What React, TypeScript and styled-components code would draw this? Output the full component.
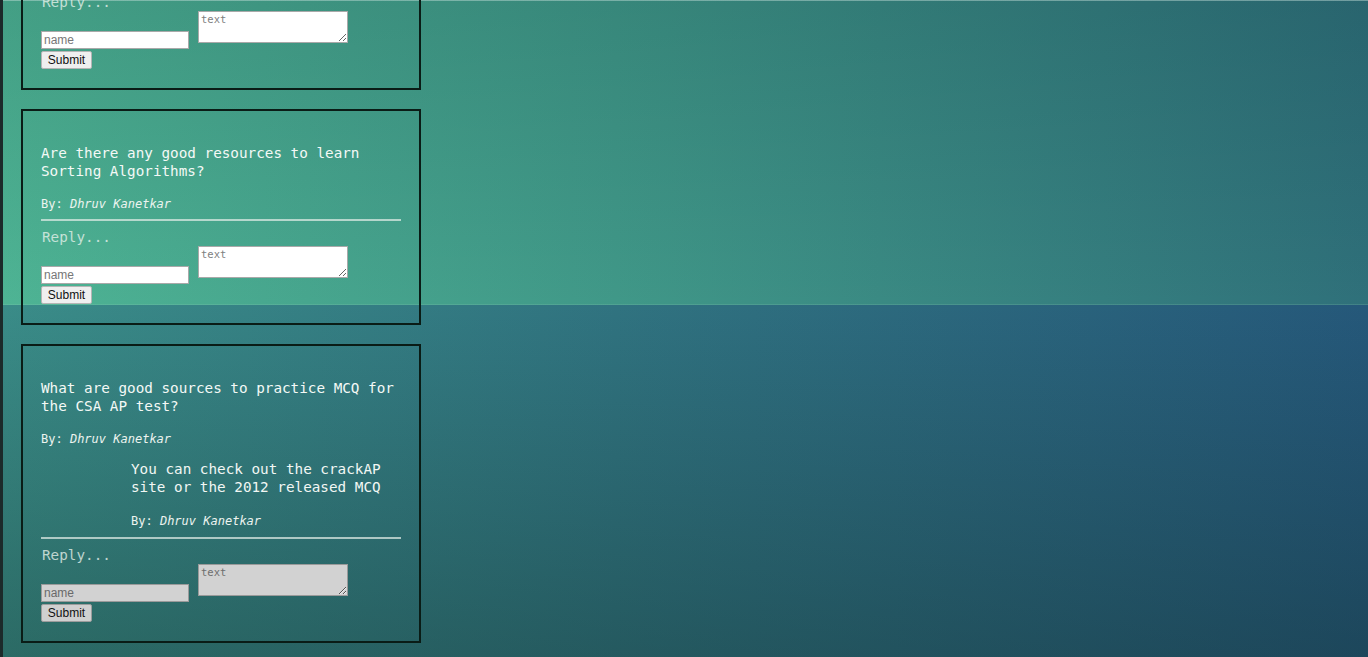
import React from "react";
import styled, { createGlobalStyle } from "styled-components";

const GlobalStyle = createGlobalStyle`
  html {
    min-height: 100%;
    background:
      linear-gradient(rgba(200, 225, 220, 0.45), rgba(200, 225, 220, 0.45)) 0 0 / 100% 1px no-repeat,
      linear-gradient(rgba(150, 210, 190, 0.18), rgba(150, 210, 190, 0.18)) 0 304px / 100% 1px no-repeat,
      linear-gradient(to bottom, rgba(0, 30, 40, 0.14), rgba(0, 30, 40, 0)) 0 0 / 100% 305px no-repeat,
      linear-gradient(to right, rgb(78, 180, 148) 0%, rgb(64, 152, 136) 45%, rgb(47, 112, 122) 100%) 0 0 / 100% 305px no-repeat,
      linear-gradient(to bottom, rgba(10, 30, 20, 0), rgba(10, 30, 20, 0.3)) 0 305px / 100% 352px no-repeat,
      linear-gradient(to right, rgb(58, 140, 136) 0%, rgb(48, 115, 128) 45%, rgb(37, 88, 122) 100%) 0 305px / 100% 352px no-repeat,
      rgb(35, 80, 100);
  }
  body {
    margin: 0;
    height: 657px;
    overflow: hidden;
    box-sizing: border-box;
    border-left: 3px solid #1c2a2a;
    font-family: "DejaVu Sans Mono", monospace;
  }
`;

const Feed = styled.main`
  display: flex;
  flex-direction: column;
  gap: 19px;
  margin-top: -126px;
  padding-left: 18px;
`;

const Card = styled.section`
  width: 400px;
  box-sizing: border-box;
  border: 2px solid #0a1c16;
  padding: 33px 18px 19px;
  display: flex;
  flex-direction: column;
  color: #f2f7f4;
`;

const Question = styled.p`
  margin: 0;
  font-size: 14.3px;
  line-height: 18px;
  color: #f4f9f6;
`;

const Byline = styled.p<{ $gap: number }>`
  margin: ${(p) => p.$gap}px 0 0;
  font-size: 12px;
  line-height: 16px;
  color: #edf4f0;
  em {
    font-style: italic;
  }
`;

const Answer = styled.div`
  margin: 13px 0 0 90px;
  display: flex;
  flex-direction: column;
`;

const AnswerText = styled.p`
  margin: 0;
  font-size: 14.3px;
  line-height: 18px;
  color: #f2f7f4;
`;

const Rule = styled.div<{ $gap: number }>`
  margin-top: ${(p) => p.$gap}px;
  height: 2px;
  background: rgba(225, 235, 230, 0.72);
`;

const ReplyLabel = styled.div`
  margin: 8px 0 0 1px;
  font-size: 14.3px;
  line-height: 17px;
  color: rgba(232, 242, 236, 0.78);
`;

const ReplyForm = styled.form`
  display: flex;
  flex-direction: column;
  align-items: flex-start;
  gap: 2px;
`;

const Row = styled.div`
  display: flex;
  align-items: flex-start;
  gap: 9px;
  height: 38px;
`;

const NameInput = styled.input<{ $muted: boolean }>`
  margin-top: 20px;
  width: 148px;
  height: 18px;
  box-sizing: border-box;
  border: 1px solid ${(p) => (p.$muted ? "#9a9a9a" : "#a9a9a9")};
  border-radius: 0;
  padding: 0 2px;
  background: ${(p) => (p.$muted ? "#d2d2d2" : "#ffffff")};
  font-family: "Liberation Sans", Arial, sans-serif;
  font-size: 12px;
  color: #222;
  outline: none;
  &::placeholder {
    color: ${(p) => (p.$muted ? "#6a6a6a" : "#777")};
  }
`;

const TextArea = styled.textarea<{ $muted: boolean }>`
  width: 150px;
  height: 32px;
  box-sizing: border-box;
  border: 1px solid ${(p) => (p.$muted ? "#9a9a9a" : "#a9a9a9")};
  padding: 1px 2px;
  margin: 0;
  background: ${(p) => (p.$muted ? "#d2d2d2" : "#ffffff")};
  font-family: "DejaVu Sans Mono", monospace;
  font-size: 10.5px;
  line-height: 13px;
  color: #222;
  outline: none;
  &::placeholder {
    color: ${(p) => (p.$muted ? "#6e6e6e" : "#808080")};
  }
`;

const SubmitButton = styled.button<{ $muted: boolean }>`
  width: 51px;
  height: 18px;
  box-sizing: border-box;
  padding: 0;
  border: 1px solid ${(p) => (p.$muted ? "#9c9c9c" : "#b5b5b5")};
  border-radius: 2px;
  background: ${(p) => (p.$muted ? "#d0d0d0" : "#efefef")};
  font-family: "Liberation Sans", Arial, sans-serif;
  font-size: 12px;
  color: #111;
`;

type Reply = { text: string; author: string };
type Post = { question: string; author: string; replies: Reply[]; muted: boolean };

const posts: Post[] = [
  {
    question: "How should I prepare for the free response questions?",
    author: "Dhruv Kanetkar",
    replies: [],
    muted: false,
  },
  {
    question: "Are there any good resources to learn Sorting Algorithms?",
    author: "Dhruv Kanetkar",
    replies: [],
    muted: false,
  },
  {
    question: "What are good sources to practice MCQ for the CSA AP test?",
    author: "Dhruv Kanetkar",
    replies: [
      {
        text: "You can check out the crackAP site or the 2012 released MCQ",
        author: "Dhruv Kanetkar",
      },
    ],
    muted: true,
  },
];

function PostCard({ post }: { post: Post }) {
  const hasReplies = post.replies.length > 0;
  return (
    <Card>
      <Question>{post.question}</Question>
      <Byline $gap={16}>
        By: <em>{post.author}</em>
      </Byline>
      {post.replies.map((r, i) => (
        <Answer key={i}>
          <AnswerText>{r.text}</AnswerText>
          <Byline $gap={17}>
            By: <em>{r.author}</em>
          </Byline>
        </Answer>
      ))}
      <Rule $gap={hasReplies ? 8 : 7} />
      <ReplyLabel>Reply...</ReplyLabel>
      <ReplyForm onSubmit={(e) => e.preventDefault()}>
        <Row>
          <NameInput $muted={post.muted} placeholder="name" />
          <TextArea $muted={post.muted} placeholder="text" />
        </Row>
        <SubmitButton $muted={post.muted} type="submit">
          Submit
        </SubmitButton>
      </ReplyForm>
    </Card>
  );
}

export default function App() {
  return (
    <>
      <GlobalStyle />
      <Feed>
        {posts.map((p, i) => (
          <PostCard key={i} post={p} />
        ))}
      </Feed>
    </>
  );
}
